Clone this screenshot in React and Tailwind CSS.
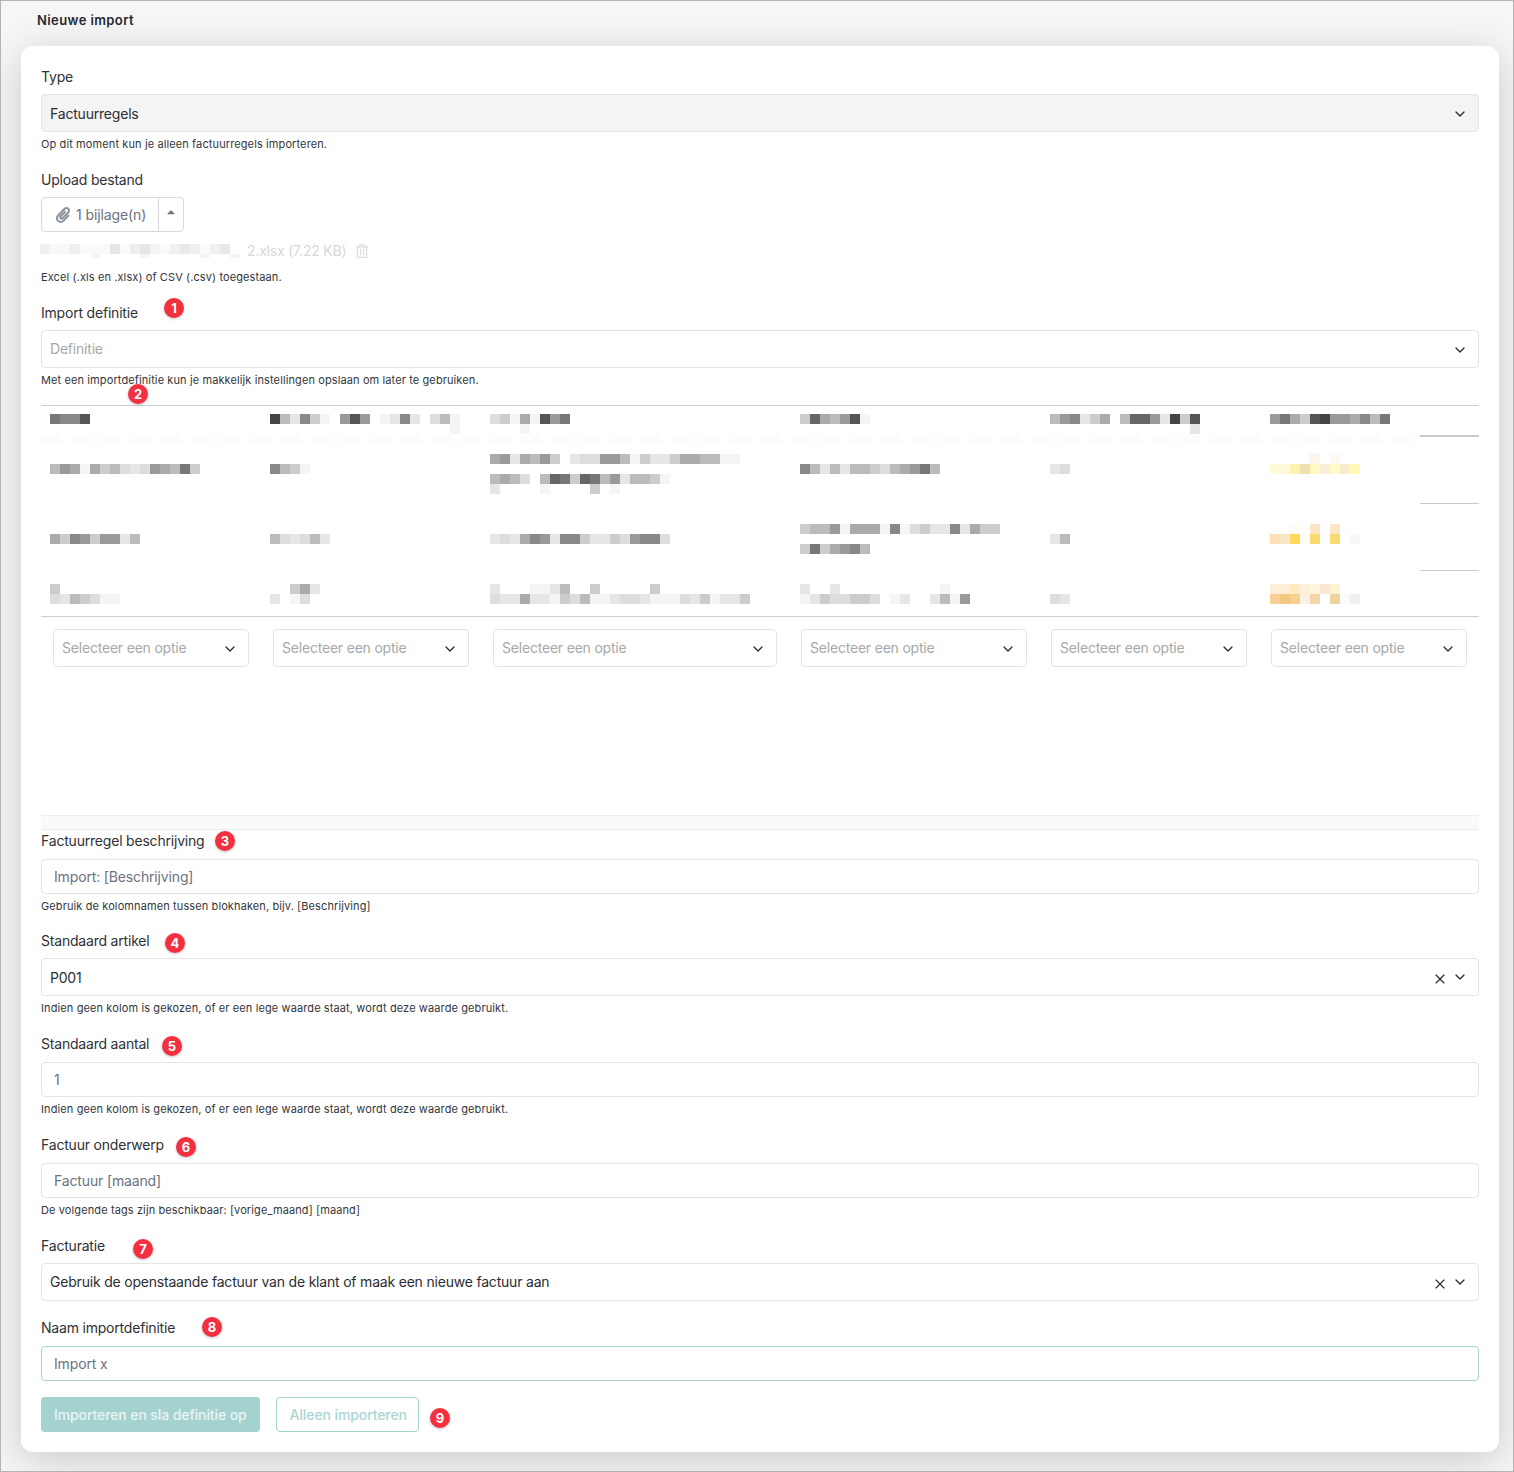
import React from "react";
import { ChevronDown, X } from "lucide-react";
import { FaPaperclip, FaRegTrashAlt, FaCaretUp } from "react-icons/fa";

const shade = (c) => {
  if (c === ".") return "transparent";
  if (c.length > 1) return c;
  if (c === "f") return "#f5f5f5";
  if (c === "e") return "#e6e6e6";
  return "#" + c + c + c + c + c + c;
};

function Px({ rows, className = "" }) {
  return (
    <div className={className}>
      {rows.map((r, i) => {
        const cells = Array.isArray(r) ? r : r.split("");
        return (
          <div key={i} className="flex h-[10px]">
            {cells.map((c, j) => (
              <div key={j} className="h-[10px] w-[10px] shrink-0" style={{ background: shade(c) }} />
            ))}
          </div>
        );
      })}
    </div>
  );
}

const COLS = "grid grid-cols-[220px_220px_308px_250px_220px_161px_59px]";

const TABLE = [
  {
    pt: "pt-[8px]",
    line: "border-b-2",
    h: "h-[31px]",
    cells: [
      ["7885"],
      ["4be8cf.959.fe8e.dbf", "..................f"],
      ["dcfaf597", "...f"],
      ["c6ab95f"],
      ["b98eca.b669e4c5", "..............e"],
      ["97ac5499a8b7"],
    ],
  },
  {
    pt: "pt-[17px]",
    line: "border-b",
    h: "h-[67px]",
    cells: [
      ["", "b9afacbded9ab7c"],
      ["", "8bcf"],
      ["a9eab9c.edd99bfceecaabbff", "", "babd.b67c67b9ebbcf", "e....f....c.f"],
      ["", "8bebebbcdba97b"],
      ["", "ed"],
      [
        [".", ".", ".", ".", "#fdf5ea", ".", "#fef9f0"],
        ["#fffbd8", "#fdf8de", "#fdf3b0", "#f1e0b0", "#fff8c0", "#f8eeda", "#fffbc8", "#f8ecd0", "#fff9b8"],
      ],
    ],
  },
  {
    pt: "pt-[20px]",
    line: "border-b",
    h: "h-[67px]",
    cells: [
      ["", "ac89c99eb"],
      ["", "bdedbe"],
      ["", "edea89e88ceecd988d"],
      ["cbb9faaaf8fdcee8eacc", "", "c7ca98b"],
      ["", "eb"],
      [
        [".", ".", "#fefbf4", ".", "#fde6c4", ".", "#fde6c4"],
        ["#fbe0b8", "#f9e6c8", "#fdda5c", "#fdfbf6", "#f9dc70", ".", "#f8dc70", ".", "#f8f8f8"],
      ],
    ],
  },
  {
    pt: "pt-[13px]",
    line: "",
    h: "h-[45px]",
    cells: [
      ["c", "debcdff"],
      ["..cae", "e.fd"],
      ["e...ffeb..c.....c", "deeaeefcdbffeddefffdecfeec"],
      ["e..e..........f", "fecddccd.fe..ebf9"],
      ["", "de"],
      [
        ["#fdeed8", "#fdeed8", "#fcebc0", "#fdf0d8", "#fdf6dc", "#fae8d4", "#fdf3d0"],
        ["#f8cf98", "#f3c880", "#f3d090", "#faf0e4", "#f3d5a8", ".", "#edd49c", "#fbfbfb", "#f0f0f0"],
      ],
    ],
  },
];

const PAD = ["pl-[9px]", "pl-[9px]", "pl-[9px]", "pl-[11px]", "pl-[11px]", "pl-[11px]"];

function Label({ children, className = "" }) {
  return <div className={"h-5 text-[14px] leading-5 tracking-[-0.2px] text-[#2f3136] " + className}>{children}</div>;
}
function Help({ children, className = "mt-1" }) {
  return <div className={"h-4 text-[11px] leading-4 tracking-[0.11px] text-[#33363b] " + className}>{children}</div>;
}
function Select({ value, placeholder, clear, disabled, textClass = "", className = "" }) {
  return (
    <div
      className={
        "flex h-[38px] items-center justify-between rounded border border-[#e4e4e4] pl-2 pr-[10px] text-[14px] tracking-[-0.2px] " +
        (disabled ? "bg-[#f4f4f4] " : "bg-white ") +
        className
      }
    >
      <span className={(value ? "text-[#2c2e33] " : "-mt-[1px] text-[#a8a8a8] ") + textClass}>{value || placeholder}</span>
      <span className={"flex items-center gap-[4px] text-[#2c2e33] " + (clear ? "" : "mt-[1px]")}>
        {clear && <X size={16} strokeWidth={1.75} className="mt-[3px]" />}
        <ChevronDown size={16} strokeWidth={2} className={clear ? "-mt-[1px]" : ""} />
      </span>
    </div>
  );
}
function Input({ value, className = "border-[#e4e4e4]" }) {
  return (
    <div className={"flex h-[35px] items-center rounded border bg-white pl-3 text-[14px] tracking-[-0.15px] text-[#6b7280] " + className}>
      {value}
    </div>
  );
}
function Badge({ n, className }) {
  return (
    <div
      className={
        "absolute flex h-5 w-5 items-center justify-center rounded-full bg-[#f42f3f] text-[13px] font-bold leading-none text-white shadow-[0_1px_3px_rgba(0,0,0,0.25)] " +
        className
      }
    >
      {n}
    </div>
  );
}

export default function App() {
  return (
    <div
      className="relative h-[1472px] w-[1514px] overflow-hidden border border-[#b4b4b4] bg-[#f6f6f6] text-[#2f3136]"
      style={{ fontFamily: "Inter, 'Noto Sans', sans-serif" }}
    >
      <div className="h-[45px] pl-[36px] pt-[9px] text-[13px] font-semibold leading-5 tracking-[0.4px] text-[#26282c]">Nieuwe import</div>

      <div className="ml-[20px] h-[1406px] w-[1478px] rounded-xl bg-white px-[20px] pt-[21px] shadow-[0_8px_40px_rgba(0,0,0,0.18)]">
        <Label className="mb-[7px]">Type</Label>
        <Select value="Factuurregels" disabled />
        <Help>Op dit moment kun je alleen factuurregels importeren.</Help>

        <Label className="mt-[18px] mb-[7px]">Upload bestand</Label>
        <div className="flex h-[35px] w-[143px] rounded border border-[#d9d9d9] text-[14px] tracking-[-0.1px] text-[#6b7280]">
          <div className="flex w-[117px] items-center gap-[5px] border-r border-[#d9d9d9] pl-[13px]">
            <FaPaperclip size={16} className="text-[#8b929b]" />
            <span>1 bijlage(n)</span>
          </div>
          <div className="flex flex-1 items-start justify-center pt-[8px] text-[#6b7280]">
            <FaCaretUp size={12} />
          </div>
        </div>
        <div className="mt-[9px] flex h-5 items-center text-[14px] tracking-[-0.2px] text-[#d8d8d8]">
          <div className="-ml-[1px] mr-[7px] h-[14px] w-[200px] overflow-hidden">
            <Px rows={[["#f0f0f0", "#f8f8f8", "#f8f8f8", "#efefef", "#fafafa", "#fafafa", "#fafafa", "#e6e6e6", "#fafafa", "#eeeeee", "#e6e6e6", "#f4f4f4", "#fafafa", "#f0f0f0", "#e9e9e9", "#efefef", "#fafafa", "#f0f0f0", "#e9e9e9"], ".....f....f.....f..f"]} />
          </div>
          <span className="-mt-[1px]">2.xlsx (7.22 KB)</span>
          <FaRegTrashAlt size={14} className="ml-[9px] -mt-[1px] text-[#dcdcdc]" />
        </div>
        <Help className="mt-2">Excel (.xls en .xlsx) of CSV (.csv) toegestaan.</Help>

        <Label className="mt-[18px] mb-[7px]">Import definitie</Label>
        <Select placeholder="Definitie" />
        <Help>Met een importdefinitie kun je makkelijk instellingen opslaan om later te gebruiken.</Help>

        <div className="relative mt-[17px] border-y border-y-[#cdcdd2]">
          <div className="absolute left-0 top-[29px] h-[9px] w-[1379px] bg-[repeating-linear-gradient(90deg,#fcfcfc_0_20px,#ffffff_20px_30px)]" />
          {TABLE.map((row, i) => (
            <div key={i} className={COLS + " relative " + row.h}>
              {row.cells.map((c, j) => (
                <Px key={j} rows={c} className={PAD[j] + " " + row.pt} />
              ))}
              <div className={"border-[#c9c9d0] " + row.line} />
            </div>
          ))}
        </div>

        <div className="grid grid-cols-[220px_220px_308px_250px_220px_220px] pt-3">
          {[0, 1, 2, 3, 4, 5].map((k) => (
            <div key={k} className="px-3">
              <Select placeholder="Selecteer een optie" />
            </div>
          ))}
        </div>

        <div className="mt-[148px] h-[15px] border-y border-[#ececec] bg-[#fafafa]" />

        <Label className="mt-[1px] mb-2">Factuurregel beschrijving</Label>
        <Input value="Import: [Beschrijving]" />
        <Help>Gebruik de kolomnamen tussen blokhaken, bijv. [Beschrijving]</Help>

        <Label className="mt-[17px] mb-[7px]">Standaard artikel</Label>
        <Select value="P001" clear />
        <Help>Indien geen kolom is gekozen, of er een lege waarde staat, wordt deze waarde gebruikt.</Help>

        <Label className="mt-[18px] mb-2">Standaard aantal</Label>
        <Input value="1" />
        <Help>Indien geen kolom is gekozen, of er een lege waarde staat, wordt deze waarde gebruikt.</Help>

        <Label className="mt-[18px] mb-2">Factuur onderwerp</Label>
        <Input value="Factuur [maand]" />
        <Help>De volgende tags zijn beschikbaar: [vorige_maand] [maand]</Help>

        <Label className="mt-[18px] mb-[7px]">Facturatie</Label>
        <Select value="Gebruik de openstaande factuur van de klant of maak een nieuwe factuur aan" clear textClass="-mt-[1px]" />

        <Label className="mt-[17px] mb-2">Naam importdefinitie</Label>
        <Input value="Import x" className="border-[#a5d5d2]" />

        <div className="mt-4 flex gap-4 text-[14px] tracking-[-0.1px]">
          <div className="flex h-[35px] items-center rounded bg-[#a4d2cf] px-[13px] font-medium text-[#e9f5f4]">
            Importeren en sla definitie op
          </div>
          <div className="flex h-[35px] w-[143px] items-center whitespace-nowrap rounded border border-[#a4d2cf] bg-white pl-[13px] font-medium text-[#a9d6d3]">
            Alleen importeren
          </div>
        </div>
      </div>

      <Badge n="1" className="left-[163px] top-[297px]" />
      <Badge n="2" className="left-[127px] top-[383px]" />
      <Badge n="3" className="left-[214px] top-[830px]" />
      <Badge n="4" className="left-[164px] top-[932px]" />
      <Badge n="5" className="left-[161px] top-[1035px]" />
      <Badge n="6" className="left-[175px] top-[1136px]" />
      <Badge n="7" className="left-[132px] top-[1238px]" />
      <Badge n="8" className="left-[201px] top-[1316px]" />
      <Badge n="9" className="left-[429px] top-[1407px]" />
    </div>
  );
}
